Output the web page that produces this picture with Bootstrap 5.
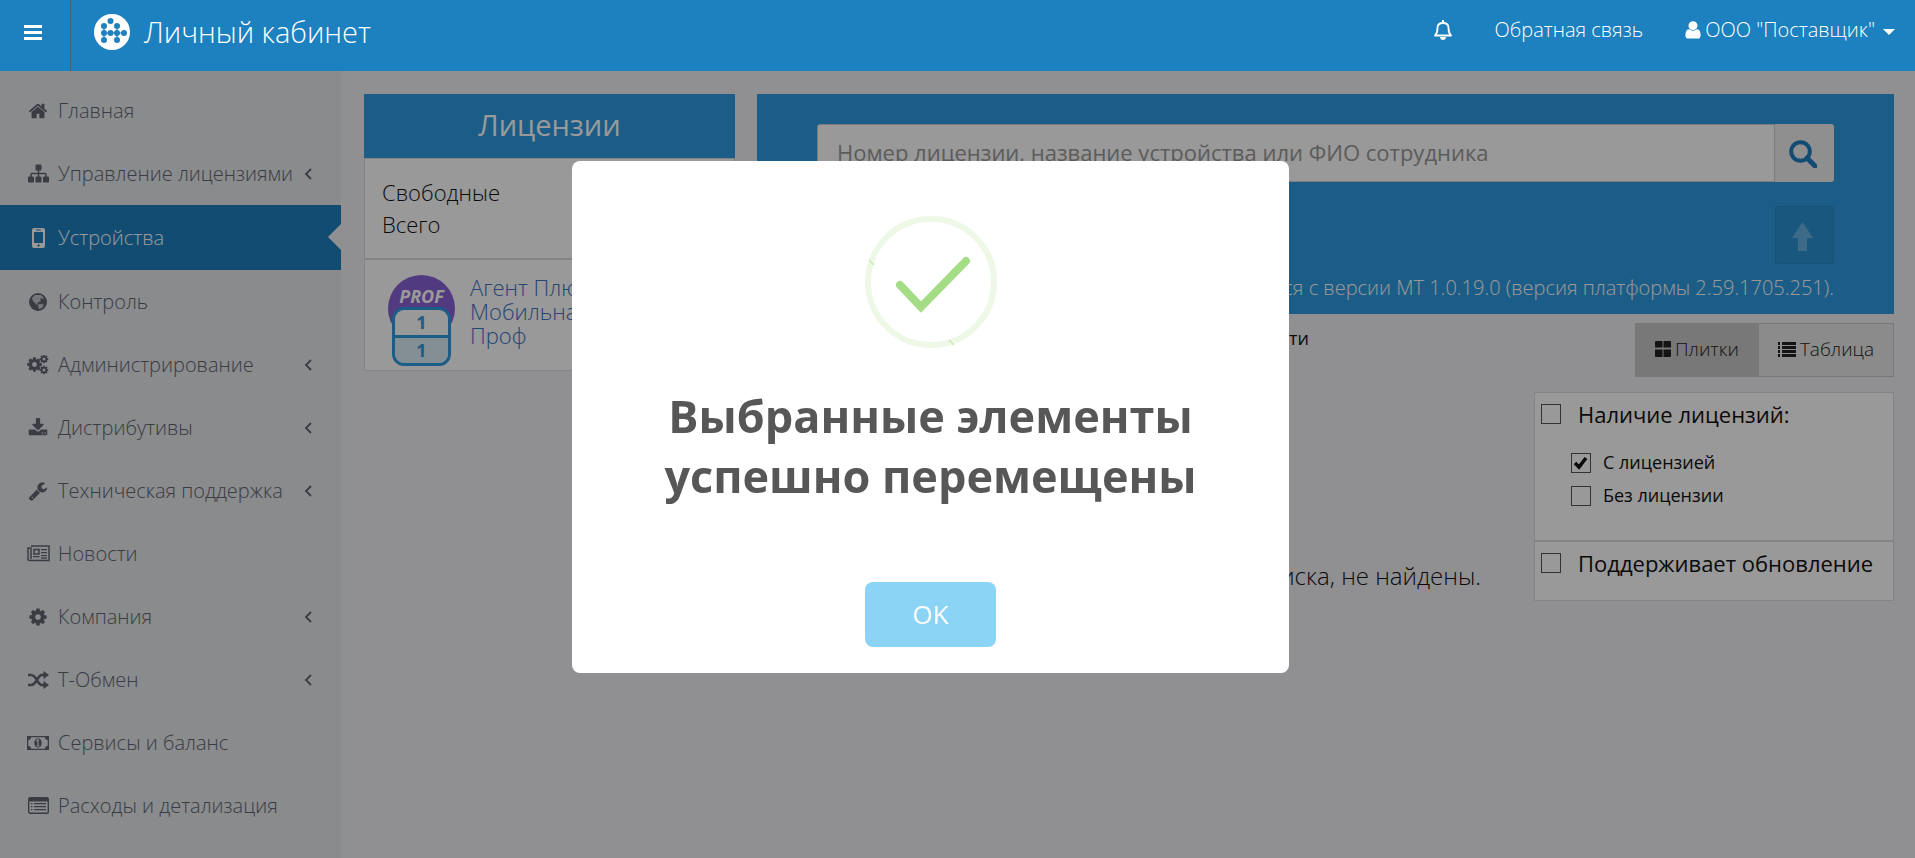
<!DOCTYPE html>
<html lang="ru">
<head>
<meta charset="utf-8">
<meta name="viewport" content="width=device-width, initial-scale=1">
<title>Личный кабинет</title>
<link rel="stylesheet" href="https://cdn.jsdelivr.net/npm/bootstrap@5.3.0/dist/css/bootstrap.min.css">
<style>
:root { --brand: #1d80bf; --panel: #2d9be1; --line: #dcdcdc; }
body { font-family: "Open Sans", sans-serif; font-weight: 300; font-size: 20px; color: #111; background: #f1f1f5; overflow: hidden; }
svg { fill: currentColor; flex: none; }
.topbar { height: 71px; background: var(--brand); color: #fff; position: relative; z-index: 1080; }
.topbar a, .topbar button { color: #fff; text-decoration: none; }
.menu-toggle { width: 71px; padding: 0 0 10px 24px; background: none; border: 0; border-right: 1px solid #3d6479; text-align: left; }
.site-link { padding: 0 0 8px 23px; gap: 14px; }
.site-title { font-size: 29px; line-height: 40px; }
.top-links { gap: 42px; padding-right: 20px; padding-bottom: 11px; }
.caret-down { border: 6px solid transparent; border-top-color: #fff; border-bottom: 0; margin: 4px 0 0 8px; }
.sidebar { width: 341px; background: #e6e8ec; min-height: calc(100vh - 71px); padding-top: 8px; flex: none; }
.sidebar a { height: 63px; padding: 0 29px 0 24px; color: #60646f; text-decoration: none; position: relative; }
.sidebar a.active { height: 65px; background: #1e7fbe; color: #fff; }
.sidebar a.active::after { content: ""; position: absolute; right: 0; top: 19px; border: 13px solid transparent; border-left: 0; border-right-color: #f1f1f5; }
.side-icon { width: 28px; margin-right: 6px; text-align: center; display: flex; justify-content: center; }
.content-area { padding: 23px 21px 0 23px; gap: 22px; min-width: 0; }
.licenses { width: 371px; flex: none; }
.panel-title { background: var(--panel); color: #fff; font-size: 29px; font-weight: 400; height: 64px; line-height: 62px; }
.white-box { background: #fff; border: 1px solid var(--line); }
.summary { font-size: 22px; line-height: 32px; padding: 17px; height: 101px; }
.license { height: 112px; padding: 15px 23px; gap: 15px; }
.license a { font-size: 22px; line-height: 24px; color: #4173c0; text-decoration: none; }
.prof { width: 67px; height: 67px; border-radius: 50%; background: #8861d5; color: #fff; position: relative; font-size: 18px; font-weight: 700; font-style: italic; line-height: 42px; text-align: center; flex: none; }
.counts { position: absolute; left: 4px; top: 32px; width: 59px; height: 59px; border: 3px solid var(--panel); border-radius: 12px; background: #fff; color: var(--panel); font-size: 18px; font-style: normal; line-height: 25px; overflow: hidden; }
.counts div + div { border-top: 3px solid var(--panel); background: #dceef8; }
.search-panel { background: var(--panel); padding: 30px 60px 11px; color: #fff; height: 220px; }
.search-panel input { height: 58px; border-radius: 3px 0 0 3px; border: 1px solid #d0d0d0; font-size: 22px; font-weight: 400; padding: 0 19px 2px; }
.search-panel input::placeholder { color: #999; }
.square-btn { width: 59px; height: 58px; border: 0; padding: 0 4px 0 0; border-radius: 0 3px 3px 0; background: #eee; color: #1e7fbe; }
.up-btn { background: #2b91d2; color: #64b1e2; border: 1px solid #2989c8; border-radius: 3px; }
.version-note { font-size: 20px; line-height: 30px; }
.view-row { padding-top: 9px; }
.sort-note { width: 552px; font-size: 18px; line-height: 30px; font-weight: 400; }
.view-btn { height: 54px; background: #e8e8e8; border: 1px solid #c8c8c8; font-size: 19px; font-weight: 300; color: #222; padding: 0 19px 2px; gap: 4px; }
.view-btn.active { background: #c9c9c9; }
.filters-row { padding-top: 15px; }
.filters { width: 360px; flex: none; }
.filters input { appearance: none; width: 20px; height: 20px; border: 1px solid #555; margin: 0; background: #fff; flex: none; }
.filters input:checked { background: #fff url("data:image/svg+xml,%3Csvg xmlns='http://www.w3.org/2000/svg' viewBox='0 0 18 18'%3E%3Cpath d='M3 9l4 4 7-9' fill='none' stroke='%23111' stroke-width='3.5'/%3E%3C/svg%3E") center/18px; }
.filters fieldset { padding: 5px 6px; height: 149px; }
.filters fieldset.single { height: 60px; }
.filter-head { font-size: 22px; font-weight: 400; line-height: 32px; gap: 17px; white-space: nowrap; }
.filter-child { font-size: 18px; font-weight: 400; line-height: 33px; gap: 12px; padding-left: 30px; }
.empty-note { font-size: 24px; line-height: 32px; padding: 168px 53px 0 0; }
.shade { position: fixed; inset: 0; background: rgba(0,0,0,.4); z-index: 1070; }
.alert-layer { z-index: 1090; padding-right: 54px; pointer-events: none; }
.alert-layer .modal-dialog { max-width: 717px; margin-top: 161px; }
.alert-layer .modal-content { border: 0; border-radius: 8px; height: 512px; padding: 55px 26px 26px; pointer-events: auto; }
.alert-heading-text { font-size: 45px; line-height: 60px; font-weight: 700; color: #575757; margin: 38px 0 0; }
.ok-btn { width: 131px; height: 65px; background: #8cd4f5; color: #fff; border: 0; border-radius: 8px; font-size: 26px; font-weight: 400; }
</style>
</head>
<body>
<svg class="d-none">
  <symbol id="cog" viewBox="0 0 1792 1792"><path d="M1152 896q0-106-75-181t-181-75-181 75-75 181 75 181 181 75 181-75 75-181zm512-109v222q0 12-8 23t-20 13l-185 28q-19 54-39 91 35 50 107 138 10 12 10 25t-9 23q-27 37-99 108t-94 71q-12 0-26-9l-138-108q-44 23-91 38-16 136-29 186-7 28-36 28h-222q-14 0-24.5-8.5t-11.5-21.5l-28-184q-49-16-90-37l-141 107q-10 9-25 9-14 0-25-11-126-114-165-168-7-10-7-23 0-12 8-23 15-21 51-66.5t54-70.5q-27-50-41-99l-183-27q-13-2-21-12.5t-8-23.5v-222q0-12 8-23t19-13l186-28q14-46 39-92-40-57-107-138-10-12-10-24 0-10 9-23 26-36 98.5-107.5t94.5-71.5q13 0 26 10l138 107q44-23 91-38 16-136 29-186 7-28 36-28h222q14 0 24.5 8.5t11.5 21.5l28 184q49 16 90 37l142-107q9-9 24-9 13 0 25 10 129 119 165 170 7 8 7 22 0 12-8 23-15 21-51 66.5t-54 70.5q26 50 41 98l183 28q13 2 21 12.5t8 23.5z"/></symbol>
  <symbol id="chev" viewBox="0 0 8 14"><path d="M7 2L2 7l5 5" fill="none" stroke="currentColor" stroke-width="1.8"/></symbol>
</svg>

<header class="topbar d-flex">
  <button class="menu-toggle" type="button" aria-label="Меню"><svg width="18" height="15" viewBox="0 0 18 15"><path d="M0 0h18v3H0zM0 6h18v3H0zM0 12h18v3H0z"/></svg></button>
  <a href="#" class="site-link d-flex align-items-center">
    <svg width="36" height="36" viewBox="0 0 36 36"><circle cx="18" cy="18" r="18"/><g stroke="#1d80bf" stroke-width="1.2"><path d="M10 12v14M23 12v14M10 19h20" /></g><g fill="#1d80bf"><circle cx="16.500" cy="7" r="3"/><circle cx="10" cy="12" r="3"/><circle cx="23" cy="12" r="3"/><circle cx="10" cy="19" r="3"/><circle cx="16.500" cy="19" r="3"/><circle cx="23" cy="19" r="3"/><circle cx="30" cy="19" r="3"/><circle cx="10" cy="26" r="3"/><circle cx="23" cy="26" r="3"/></g></svg>
    <span class="site-title">Личный кабинет</span>
  </a>
  <nav class="top-links d-flex align-items-center ms-auto">
    <a href="#" class="d-flex" aria-label="Уведомления"><svg width="20" height="20" viewBox="0 0 20 20"><path d="M2 15.500c2-2 2.500-4 2.500-7.500 0-3 2-5 5.500-5s5.500 2 5.500 5c0 3.500.5 5.500 2.500 7.500z" fill="none" stroke="currentColor" stroke-width="1.800" stroke-linejoin="round"/><path d="M9 0h2v3H9zM7 17h6c0 4-6 4-6 0z"/></svg></a>
    <a href="#">Обратная связь</a>
    <a href="#" class="d-flex align-items-center"><svg class="me-1" width="16" height="18" viewBox="220 100 1350 1600" preserveAspectRatio="none"><path d="M1536 1399q0 109-62.500 187t-150.500 78h-854q-88 0-150.500-78t-62.500-187q0-85 8.500-160.500t31.500-152 58.500-131 94-89 134.500-34.500q131 128 313 128t313-128q76 0 134.500 34.500t94 89 58.500 131 31.500 152 8.500 160.500zm-256-887q0 159-112.500 271.500t-271.500 112.500-271.500-112.500-112.500-271.500 112.500-271.500 271.500-112.500 271.500 112.500 112.500 271.500z"/></svg>ООО "Поставщик"<span class="caret-down"></span></a>
  </nav>
</header>

<div class="d-flex">
  <nav class="sidebar">
    <a href="#" class="d-flex align-items-center"><span class="side-icon"><svg width="20" height="20" viewBox="0 0 1792 1792"><path d="M1472 992v480q0 26-19 45t-45 19h-384v-384h-256v384h-384q-26 0-45-19t-19-45v-480q0-1 .5-3t.5-3l575-474 575 474q1 2 1 6zm223-69l-62 74q-8 9-21 11h-3q-13 0-21-7l-692-577-692 577q-12 8-24 7-13-2-21-11l-62-74q-8-10-7-23.500t11-21.500l719-599q32-26 76-26t76 26l244 204v-195q0-14 9-23t23-9h192q14 0 23 9t9 23v408l219 182q10 8 11 21.500t-7 23.500z"/></svg></span>Главная</a>
    <a href="#" class="d-flex align-items-center"><span class="side-icon"><svg width="21" height="21" viewBox="0 0 1792 1792"><path d="M1792 1248v320q0 40-28 68t-68 28h-320q-40 0-68-28t-28-68v-320q0-40 28-68t68-28h96v-192h-512v192h96q40 0 68 28t28 68v320q0 40-28 68t-68 28h-320q-40 0-68-28t-28-68v-320q0-40 28-68t68-28h96v-192h-512v192h96q40 0 68 28t28 68v320q0 40-28 68t-68 28h-320q-40 0-68-28t-28-68v-320q0-40 28-68t68-28h96v-192q0-52 38-90t90-38h512v-192h-96q-40 0-68-28t-28-68v-320q0-40 28-68t68-28h320q40 0 68 28t28 68v320q0 40-28 68t-68 28h-96v192h512q52 0 90 38t38 90v192h96q40 0 68 28t28 68z"/></svg></span>Управление лицензиями<svg class="ms-auto" width="8" height="14"><use href="#chev"/></svg></a>
    <a href="#" class="active d-flex align-items-center"><span class="side-icon"><svg width="13" height="20" viewBox="0 0 13 20"><path fill-rule="evenodd" d="M2 0h9q2 0 2 2v16q0 2-2 2H2q-2 0-2-2V2q0-2 2-2zM2 4v11h9V4zM4 1.500v1h5v-1zM6.500 16.300a1.200 1.200 0 1 0 .1 0z"/></svg></span>Устройства</a>
    <a href="#" class="d-flex align-items-center"><span class="side-icon"><svg width="18" height="18" viewBox="0 0 18 18"><circle cx="9" cy="9" r="9"/><path fill="#e6e8ec" d="M9 2l3 0 3 3-1 1-2-1-1 2 1 1-2 1-2 1 1 1-1 1-2-2-2-2-1-3 3-3 2 0zM10 11l3 0 2 1-2 3-3 1-1-3z" opacity=".75"/></svg></span>Контроль</a>
    <a href="#" class="d-flex align-items-center"><span class="side-icon"><svg width="22" height="20" viewBox="0 0 22 20"><use href="#cog" x="-1" y="1" width="17" height="17"/><use href="#cog" x="12" y="-1" width="10" height="10"/><use href="#cog" x="12" y="10" width="10" height="10"/></svg></span>Администрирование<svg class="ms-auto" width="8" height="14"><use href="#chev"/></svg></a>
    <a href="#" class="d-flex align-items-center"><span class="side-icon"><svg width="20" height="20" viewBox="0 0 1792 1792"><path d="M1344 1344q0-26-19-45t-45-19-45 19-19 45 19 45 45 19 45-19 19-45zm256 0q0-26-19-45t-45-19-45 19-19 45 19 45 45 19 45-19 19-45zm128-224v320q0 40-28 68t-68 28h-1472q-40 0-68-28t-28-68v-320q0-40 28-68t68-28h465l135 136q58 56 136 56t136-56l136-136h464q40 0 68 28t28 68zm-325-569q17 41-14 70l-448 448q-18 19-45 19t-45-19l-448-448q-31-29-14-70 17-39 59-39h256v-448q0-26 19-45t45-19h256q26 0 45 19t19 45v448h256q42 0 59 39z"/></svg></span>Дистрибутивы<svg class="ms-auto" width="8" height="14"><use href="#chev"/></svg></a>
    <a href="#" class="d-flex align-items-center"><span class="side-icon"><svg width="20" height="20" viewBox="0 0 1792 1792"><path d="M448 1472q0-26-19-45t-45-19-45 19-19 45 19 45 45 19 45-19 19-45zm644-420l-682 682q-37 37-90 37-52 0-91-37l-106-108q-38-36-38-90 0-53 38-91l681-681q39 98 114.500 173.500t173.500 114.500zm634-435q0 39-23 106-47 134-164.500 217.500t-258.500 83.500q-185 0-316.500-131.500t-131.500-316.500 131.500-316.500 316.500-131.500q58 0 121.500 16.500t107.500 46.500q16 11 16 28t-16 28l-293 169v224l193 107q5-3 79-48.500t135.500-81 70.500-35.500q15 0 23.500 10t8.500 25z"/></svg></span>Техническая поддержка<svg class="ms-auto" width="8" height="14"><use href="#chev"/></svg></a>
    <a href="#" class="d-flex align-items-center"><span class="side-icon"><svg width="23" height="17" viewBox="0 0 23 17"><path fill="none" stroke="currentColor" stroke-width="1.500" d="M4 1h18v14.500H2.500Q1 15.500 1 14V3h3v11M7 4.500h5v4.500H7z"/><path d="M14 4h6v1.300h-6zM14 7h6v1.300h-6zM14 10h6v1.300h-6zM6 11h6.500v1.300H6zM14 12.500h6v1.300h-6z"/></svg></span>Новости</a>
    <a href="#" class="d-flex align-items-center"><span class="side-icon"><svg width="20" height="20"><use href="#cog"/></svg></span>Компания<svg class="ms-auto" width="8" height="14"><use href="#chev"/></svg></a>
    <a href="#" class="d-flex align-items-center"><span class="side-icon"><svg width="21" height="18" viewBox="0 0 21 18"><path d="M0 4h3c6 0 6 10 11 10h2M0 14h3c6 0 6-10 11-10h2" fill="none" stroke="currentColor" stroke-width="2.700"/><path d="M15.500 0l5.500 4-5.500 4zM15.500 10l5.500 4-5.500 4z"/></svg></span>Т-Обмен<svg class="ms-auto" width="8" height="14"><use href="#chev"/></svg></a>
    <a href="#" class="d-flex align-items-center"><span class="side-icon"><svg width="22" height="14" viewBox="0 0 22 14"><path fill-rule="evenodd" d="M0 0h22v14H0zM4 1.300Q4 4 1.300 4v6Q4 10 4 12.700h14q0-2.700 2.700-2.700V4Q18 4 18 1.300z"/><ellipse cx="11" cy="7" rx="3.700" ry="4.700"/><path d="M9.500 5l1.500-1.500V10M9.500 10h3" fill="none" stroke="#e6e8ec" stroke-width="1.200"/></svg></span>Сервисы и баланс</a>
    <a href="#" class="d-flex align-items-center"><span class="side-icon"><svg width="21" height="17" viewBox="0 0 21 17"><rect x=".7" y=".7" width="19.600" height="15.600" rx="1.500" fill="none" stroke="currentColor" stroke-width="1.400"/><path d="M1 1h19v3.500H1zM3 6h1.500v1.300H3zM6 6h12v1.300H6zM3 9h1.500v1.300H3zM6 9h12v1.300H6zM3 12h1.500v1.300H3zM6 12h12v1.300H6z"/></svg></span>Расходы и детализация</a>
  </nav>

  <main class="content-area d-flex flex-grow-1 align-items-start">
    <section class="licenses">
      <h2 class="panel-title text-center m-0">Лицензии</h2>
      <div class="white-box summary">Свободные<br>Всего</div>
      <div class="white-box license d-flex">
        <div class="prof">PROF<div class="counts"><div>1</div><div>1</div></div></div>
        <a href="#" class="w-50">Агент Плюс: Мобильная Проф</a>
      </div>
    </section>

    <section class="flex-grow-1">
      <form class="search-panel d-flex flex-column">
        <div class="d-flex">
          <input class="flex-grow-1" type="text" placeholder="Номер лицензии, название устройства или ФИО сотрудника" aria-label="Поиск">
          <button class="square-btn" type="button" aria-label="Найти"><svg width="28" height="28" viewBox="0 0 28 28"><circle cx="11.500" cy="11.500" r="9.300" fill="none" stroke="currentColor" stroke-width="4"/><path d="M18 18l8 8" stroke="currentColor" stroke-width="5" stroke-linecap="round"/></svg></button>
        </div>
        <button class="square-btn up-btn align-self-end mt-4" type="button" aria-label="Переместить"><svg width="21" height="29" viewBox="0 0 21 29"><path d="M10.500 0L21 16h-6v13H6V16H0z"/></svg></button>
        <div class="version-note text-end mt-auto">Обновление поддерживается с версии МТ 1.0.19.0 (версия платформы 2.59.1705.251).</div>
      </form>
      <div class="view-row d-flex justify-content-between">
        <div class="sort-note text-end">Сортировать по активности</div>
        <div class="d-flex">
          <button type="button" class="view-btn active d-flex align-items-center"><svg width="16" height="16" viewBox="0 0 17 17"><path d="M1 0h6q1 0 1 1v6H0V1q0-1 1-1zM9 0h7q1 0 1 1v6H9zM0 9h8v8H1q-1 0-1-1zM9 9h8v7q0 1-1 1H9z"/></svg>Плитки</button>
          <button type="button" class="view-btn border-start-0 d-flex align-items-center"><svg width="18" height="15" viewBox="0 0 18 15"><path d="M0 0h2v3H0zM4 0h14v3H4zM0 4h2v3H0zM4 4h14v3H4zM0 8h2v3H0zM4 8h14v3H4zM0 12h2v3H0zM4 12h14v3H4z"/></svg>Таблица</button>
        </div>
      </div>
      <div class="filters-row d-flex">
        <p class="empty-note flex-grow-1 text-end m-0">Устройства, удовлетворяющие условиям поиска, не найдены.</p>
        <div class="filters">
          <fieldset class="white-box">
            <label class="filter-head d-flex align-items-center"><input type="checkbox">Наличие лицензий:</label>
            <div class="pt-3">
              <label class="filter-child d-flex align-items-center"><input type="checkbox" checked>С лицензией</label>
              <label class="filter-child d-flex align-items-center"><input type="checkbox">Без лицензии</label>
            </div>
          </fieldset>
          <fieldset class="white-box single"><label class="filter-head d-flex align-items-center"><input type="checkbox">Поддерживает обновление</label></fieldset>
        </div>
      </div>
    </section>
  </main>
</div>

<div class="shade"></div>
<div class="alert-layer modal d-block" role="dialog" aria-labelledby="done">
  <div class="modal-dialog">
    <div class="modal-content d-flex align-items-center text-center">
      <svg width="132" height="132" viewBox="0 0 132 132" fill="none"><circle cx="66" cy="66" r="63" fill="none" stroke="#edf8e7" stroke-width="6"/><path d="M35 69l21 22 45-46" fill="none" stroke="#a5dc86" stroke-width="8" stroke-linecap="round"/><path d="M4 44l5 5M84 124l5 5" stroke="#c9eab8" stroke-width="1.500"/></svg>
      <h1 class="alert-heading-text" id="done">Выбранные элементы успешно перемещены</h1>
      <button class="ok-btn mt-auto" type="button">OK</button>
    </div>
  </div>
</div>
<script src="https://cdn.jsdelivr.net/npm/bootstrap@5.3.0/dist/js/bootstrap.bundle.min.js"></script>
</body>
</html>
